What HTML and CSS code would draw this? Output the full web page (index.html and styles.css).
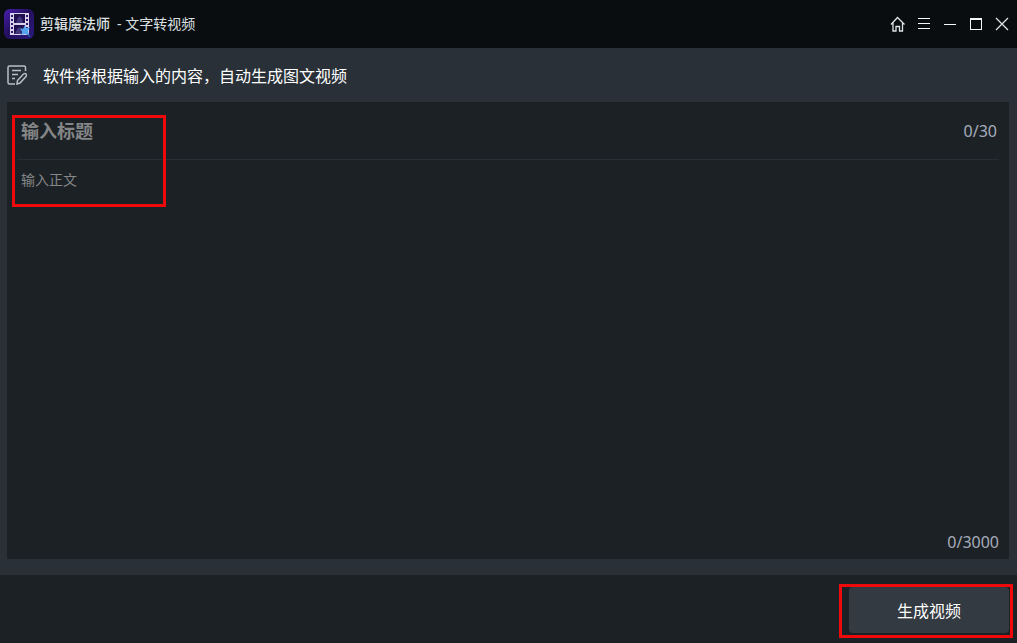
FILE: index.html
```html
<!DOCTYPE html>
<html lang="zh-CN">
    <head>
        <meta charset="utf-8">
        <meta name="viewport" content="width=device-width, initial-scale=1">
        <title>剪辑魔法师 - 文字转视频</title>
        <link rel="stylesheet" href="styles.css">
    </head>
    <body>

        <header class="titlebar">
            <svg class="logo" viewBox="0 0 30 30" aria-hidden="true">
                <defs>
                    <linearGradient id="logo-bg" x1="0" y1="0" x2="1" y2="1">
                        <stop offset="0" stop-color="#4a1fb0"/>
                        <stop offset="0.45" stop-color="#241060"/>
                        <stop offset="1" stop-color="#2a1a78"/>
                    </linearGradient>
                </defs>
                <rect width="30" height="30" rx="6" fill="url(#logo-bg)"/>
                <rect x="6" y="4" width="19" height="22" fill="#d9d4ec"/>
                <path fill="#21104f" d="M10 5h11v9H10zM10 16h11v9H10z"/>
                <path fill="#2b1668" d="M7 6h2v2H7zM7 10h2v2H7zM7 14h2v2H7zM7 18h2v2H7zM7 22h2v2H7zM22 6h2v2h-2zM22 10h2v2h-2zM22 14h2v2h-2zM22 18h2v2h-2z"/>
                <path fill="#41367c" d="M12 14l2-5 2-2 2 3 1 4zM11 25l2-5 2-2 2 3v4z"/>
                <path stroke="#2b4c99" stroke-width="2" d="M22 23l4 5"/>
                <path fill="#55a4f0" d="M21 16l1 3 4-1-2 4 1 4-4-1-4 1 1-3-2-4 3 1z"/>
            </svg>
            <h1 class="app-title"><b>剪辑魔法师</b><span>- 文字转视频</span></h1>
            <nav class="window-buttons">
                <button type="button" aria-label="主页">
                    <svg viewBox="0 0 16 16" class="home"><path d="M1 8.500L7.500 1.500l7 7M3 7v8h3v-4.500h3.500V15h3V7"/></svg>
                </button>
                <button type="button" aria-label="菜单">
                    <svg viewBox="0 0 16 16" class="crisp"><path d="M2 2.500h12M2 7.500h12M2 12.500h12"/></svg>
                </button>
                <button type="button" aria-label="最小化">
                    <svg viewBox="0 0 16 16" class="crisp"><path d="M2 8.500h12"/></svg>
                </button>
                <button type="button" aria-label="最大化">
                    <svg viewBox="0 0 16 16" class="crisp"><path d="M2.500 2.500h11v11h-11zM2 3.500h12"/></svg>
                </button>
                <button type="button" aria-label="关闭">
                    <svg viewBox="0 0 16 16" class="close"><path d="M2 2l12 12M14 2L2 14"/></svg>
                </button>
            </nav>
        </header>

        <main class="content">
            <div class="hint">
                <svg class="hint-icon" viewBox="0 0 20 20" aria-hidden="true">
                    <path d="M18.500 6V2.500Q18.500 1 17 1H2.500Q1 1 1 2.500v15Q1 19 2.500 19H8M5 5.500h9M5 9.500h6M5 13.500h3"/>
                    <path d="M10.500 15.500l6-6.500q1.500-1 2.500 0t0 2.500l-6 6.500-3 1z"/>
                </svg>
                <p>软件将根据输入的内容，自动生成图文视频</p>
            </div>
            <div class="editor">
                <div class="title-row">
                    <input class="title-input" type="text" maxlength="30" placeholder="输入标题" aria-label="输入标题">
                    <span class="count">0/30</span>
                </div>
                <textarea class="text-input" maxlength="3000" placeholder="输入正文" aria-label="输入正文"></textarea>
                <span class="count text-count">0/3000</span>
                <div class="mark mark-input"></div>
            </div>
        </main>

        <footer class="actions">
            <div class="create">
                <button class="create-button" type="button">生成视频</button>
                <div class="mark mark-create"></div>
            </div>
        </footer>

    </body>
</html>
```

FILE: styles.css
```css
* {
    box-sizing: border-box;
    margin: 0;
    padding: 0;
}

body {
    display: flex;
    flex-direction: column;
    min-height: 100vh;
    background: #293037;
    color: #ffffff;
    font-family: "Noto Sans", "Noto Sans CJK SC", sans-serif;
    font-size: 16px;
}

button,
input,
textarea {
    border: 0;
    background: none;
    color: inherit;
    font: inherit;
}

svg {
    display: block;
    fill: none;
}

.titlebar {
    display: flex;
    align-items: center;
    height: 48px;
    padding: 0 7px 0 4px;
    background: #090d10;
}
.logo {
    width: 30px;
    height: 30px;
}
.app-title {
    display: flex;
    gap: 7px;
    margin-left: 6px;
    font-size: 14px;
    font-weight: normal;
    line-height: 20px;
    color: #dce0e2;
}
.app-title b {
    font-weight: 500;
}

.window-buttons {
    display: flex;
    gap: 10px;
    margin-left: auto;
}
.window-buttons svg {
    width: 16px;
    height: 16px;
    stroke: #f4f8f8;
}
.window-buttons .crisp {
    shape-rendering: crispEdges;
}
.window-buttons .home,
.window-buttons .close {
    stroke: #dfe3e3;
    stroke-width: 1.3;
}

.content {
    flex: 1;
    display: flex;
    flex-direction: column;
    padding: 0 8px 16px 7px;
}
.hint {
    display: flex;
    align-items: center;
    gap: 16px;
    height: 54px;
}
.hint-icon {
    width: 20px;
    height: 20px;
    stroke: #b9bfc8;
    stroke-width: 1.5;
}

.editor {
    position: relative;
    flex: 1;
    display: flex;
    flex-direction: column;
    padding: 0 10px 5px;
    background: #1c2125;
}
.title-row {
    display: flex;
    align-items: center;
    height: 58px;
    padding: 0 2px 0 4px;
    border-bottom: 1px solid #292e34;
}
.title-input {
    flex: 1;
    min-width: 0;
    font-size: 18px;
    font-weight: bold;
}
.text-input {
    flex: 1;
    display: block;
    padding: 10px 4px;
    resize: none;
    font-size: 14px;
    line-height: 20px;
}
.title-input::placeholder,
.text-input::placeholder {
    color: #848688;
}
.count {
    line-height: 24px;
    color: #a6adbb;
}
.text-count {
    align-self: flex-end;
}

.actions {
    display: flex;
    justify-content: flex-end;
    padding: 12px 8px 10px;
    background: #1c2125;
}
.create {
    position: relative;
}
.create-button {
    display: block;
    width: 160px;
    height: 46px;
    border-radius: 4px;
    background: #333a41;
}

/* red frames over the controls */
.mark {
    position: absolute;
    border: 3px solid #ee0a0a;
    pointer-events: none;
}
.mark-input {
    top: 13px;
    left: 5px;
    width: 154px;
    height: 92px;
}
.mark-create {
    top: -3px;
    right: -4px;
    bottom: -5px;
    left: -10px;
}
```
